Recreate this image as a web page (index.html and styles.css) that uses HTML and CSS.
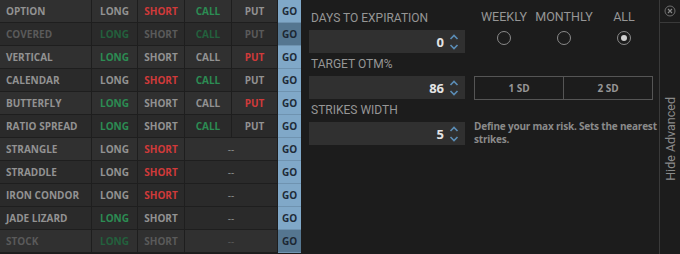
FILE: index.html
```html
<!DOCTYPE html>
<html lang="en">
<head>
  <meta charset="UTF-8" />
  <title>Strategy Builder</title>
  <link rel="stylesheet" href="styles.css">
</head>
<body>

<div class="app">
  <!-- Strategy list -->
  <div class="strategies">
    <div class="row">
      <div class="cell name">OPTION</div>
      <div class="cell">LONG</div>
      <div class="cell red">SHORT</div>
      <div class="cell green">CALL</div>
      <div class="cell">PUT</div>
      <div class="cell go">GO</div>
    </div>
    <div class="row off">
      <div class="cell name">COVERED</div>
      <div class="cell green">LONG</div>
      <div class="cell">SHORT</div>
      <div class="cell green">CALL</div>
      <div class="cell">PUT</div>
      <div class="cell go">GO</div>
    </div>
    <div class="row">
      <div class="cell name">VERTICAL</div>
      <div class="cell green">LONG</div>
      <div class="cell">SHORT</div>
      <div class="cell">CALL</div>
      <div class="cell red">PUT</div>
      <div class="cell go">GO</div>
    </div>
    <div class="row">
      <div class="cell name">CALENDAR</div>
      <div class="cell">LONG</div>
      <div class="cell red">SHORT</div>
      <div class="cell green">CALL</div>
      <div class="cell">PUT</div>
      <div class="cell go">GO</div>
    </div>
    <div class="row">
      <div class="cell name">BUTTERFLY</div>
      <div class="cell green">LONG</div>
      <div class="cell">SHORT</div>
      <div class="cell">CALL</div>
      <div class="cell red">PUT</div>
      <div class="cell go">GO</div>
    </div>
    <div class="row">
      <div class="cell name">RATIO SPREAD</div>
      <div class="cell green">LONG</div>
      <div class="cell">SHORT</div>
      <div class="cell green">CALL</div>
      <div class="cell">PUT</div>
      <div class="cell go">GO</div>
    </div>
    <div class="row">
      <div class="cell name">STRANGLE</div>
      <div class="cell">LONG</div>
      <div class="cell red">SHORT</div>
      <div class="cell wide">--</div>
      <div class="cell go">GO</div>
    </div>
    <div class="row">
      <div class="cell name">STRADDLE</div>
      <div class="cell">LONG</div>
      <div class="cell red">SHORT</div>
      <div class="cell wide">--</div>
      <div class="cell go">GO</div>
    </div>
    <div class="row dark">
      <div class="cell name">IRON CONDOR</div>
      <div class="cell">LONG</div>
      <div class="cell red">SHORT</div>
      <div class="cell wide">--</div>
      <div class="cell go">GO</div>
    </div>
    <div class="row">
      <div class="cell name">JADE LIZARD</div>
      <div class="cell green">LONG</div>
      <div class="cell">SHORT</div>
      <div class="cell wide">--</div>
      <div class="cell go">GO</div>
    </div>
    <div class="row off">
      <div class="cell name">STOCK</div>
      <div class="cell green">LONG</div>
      <div class="cell">SHORT</div>
      <div class="cell wide">--</div>
      <div class="cell go">GO</div>
    </div>
  </div>

  <!-- Advanced options -->
  <div class="advanced">
    <div class="fields">
      <label class="field-label first">DAYS TO EXPIRATION</label>
      <div class="spin">
        <span class="value">0</span>
        <svg class="arrows" width="10" height="18" viewBox="0 0 10 18">
          <path d="M1.5 6 L5 2.5 L8.5 6 M1.5 12 L5 15.5 L8.5 12" fill="none" stroke="#5b8db6" stroke-width="1.6"/>
        </svg>
      </div>
      <label class="field-label">TARGET OTM%</label>
      <div class="spin">
        <span class="value">86</span>
        <svg class="arrows" width="10" height="18" viewBox="0 0 10 18">
          <path d="M1.5 6 L5 2.5 L8.5 6 M1.5 12 L5 15.5 L8.5 12" fill="none" stroke="#5b8db6" stroke-width="1.6"/>
        </svg>
      </div>
      <label class="field-label">STRIKES WIDTH</label>
      <div class="spin">
        <span class="value">5</span>
        <svg class="arrows" width="10" height="18" viewBox="0 0 10 18">
          <path d="M1.5 6 L5 2.5 L8.5 6 M1.5 12 L5 15.5 L8.5 12" fill="none" stroke="#5b8db6" stroke-width="1.6"/>
        </svg>
      </div>
    </div>

    <div class="extras">
      <div class="radios">
        <div class="radio">
          <span>WEEKLY</span>
          <i class="dot"></i>
        </div>
        <div class="radio">
          <span>MONTHLY</span>
          <i class="dot"></i>
        </div>
        <div class="radio">
          <span>ALL</span>
          <i class="dot checked"></i>
        </div>
      </div>
      <div class="sd-buttons">
        <div class="sd">1 SD</div>
        <div class="sd">2 SD</div>
      </div>
      <p class="hint">Define your max risk. Sets the nearest<br>strikes.</p>
    </div>
  </div>

  <!-- Toggle bar -->
  <div class="sidebar">
    <div class="close">
      <svg width="12" height="12" viewBox="0 0 12 12">
        <circle cx="6" cy="6" r="5" fill="none" stroke="#6e6e6e" stroke-width="1"/>
        <path d="M4 4 L8 8 M8 4 L4 8" stroke="#8a8a8a" stroke-width="1.1"/>
      </svg>
    </div>
    <div class="toggle">Hide Advanced</div>
  </div>
</div>

</body>
</html>
```

FILE: styles.css
```css
body {
  margin: 0;
  background: #1c1c1c;
  font-family: "Open Sans", sans-serif;
}

.app {
  display: flex;
  width: 680px;
  height: 254px;
  overflow: hidden;
}

/* strategy grid */
.strategies {
  width: 301px;
  flex-shrink: 0;
}

.row {
  display: grid;
  grid-template-columns: 92px 46px 47px 47px 46px 23px;
  height: 23px;
  background: #303030;
}

.row:nth-child(even),
.row.dark {
  background: #2a2a2a;
}

.cell {
  display: flex;
  align-items: center;
  justify-content: center;
  border-right: 1px solid #1e1e1e;
  border-bottom: 1px solid #1e1e1e;
  font-size: 10px;
  font-weight: 700;
  color: #929292;
}

.cell.name {
  justify-content: flex-start;
  padding-left: 6px;
}

.cell.wide {
  grid-column: span 2;
  font-weight: 400;
}

.red {
  color: #d03a3a;
}

.green {
  color: #2c8c53;
}

.cell.go {
  background: #80a8c8;
  color: #1e2b38;
  border-right: none;
  border-bottom: 1px solid #6f93b0;
}

.row.off .cell {
  color: #5a5a5a;
}

.row.off .cell.green {
  color: #23603d;
}

.row.off .cell.go {
  background: #557690;
  color: #1c2733;
}

/* advanced panel */
.advanced {
  flex: 1;
  display: flex;
  gap: 9px;
  padding-left: 8px;
}

.fields {
  width: 156px;
  display: flex;
  flex-direction: column;
}

.field-label {
  height: 23px;
  line-height: 23px;
  padding-left: 2px;
  font-family: Roboto, sans-serif;
  font-size: 12px;
  color: #969696;
}

.field-label.first {
  height: 30px;
  line-height: 36px;
}

.spin {
  height: 23px;
  background: #303030;
  display: flex;
  align-items: center;
  justify-content: flex-end;
  gap: 5px;
  padding-right: 6px;
}

.spin .value {
  font-size: 13px;
  font-weight: 700;
  color: #e4e4e4;
}

.arrows {
  display: block;
}

.extras {
  width: 180px;
  display: flex;
  flex-direction: column;
}

.radios {
  display: flex;
  justify-content: space-between;
  padding: 9px 10px 0 10px;
  height: 69px;
  box-sizing: border-box;
}

.radio {
  width: 60px;
  display: flex;
  flex-direction: column;
  align-items: center;
  gap: 7px;
  font-family: Roboto, sans-serif;
  font-size: 12.5px;
  color: #969696;
}

.radio:first-child {
  margin-left: -10px;
}

.radio:last-child {
  margin-right: -10px;
}

.dot {
  width: 12px;
  height: 12px;
  border: 1px solid #8a8a8a;
  border-radius: 50%;
  position: relative;
}

.dot.checked::after {
  content: "";
  position: absolute;
  left: 3px;
  top: 3px;
  width: 6px;
  height: 6px;
  border-radius: 50%;
  background: #cfcfcf;
}

.sd-buttons {
  display: flex;
  height: 24px;
  margin-top: 7px;
  margin-right: 1px;
  border: 1px solid #555;
  box-sizing: border-box;
}

.sd {
  flex: 1;
  display: flex;
  align-items: center;
  justify-content: center;
  font-size: 10px;
  font-weight: 700;
  color: #969696;
}

.sd + .sd {
  border-left: 1px solid #555;
}

.hint {
  margin: 20px 0 0;
  font-size: 10px;
  font-weight: 700;
  line-height: 12.5px;
  letter-spacing: -0.2px;
  white-space: nowrap;
  color: #8a8a8a;
}

/* side toggle */
.sidebar {
  width: 20px;
  flex-shrink: 0;
  border-left: 1px solid #3a3a3a;
  display: flex;
  flex-direction: column;
}

.close {
  height: 22px;
  border-bottom: 1px solid #3a3a3a;
  display: flex;
  align-items: center;
  justify-content: center;
}

.toggle {
  writing-mode: vertical-rl;
  transform: rotate(180deg);
  align-self: center;
  margin-bottom: 73px;
  margin-top: auto;
  font-family: Roboto, sans-serif;
  font-size: 12.5px;
  color: #8a8a8a;
}
```
